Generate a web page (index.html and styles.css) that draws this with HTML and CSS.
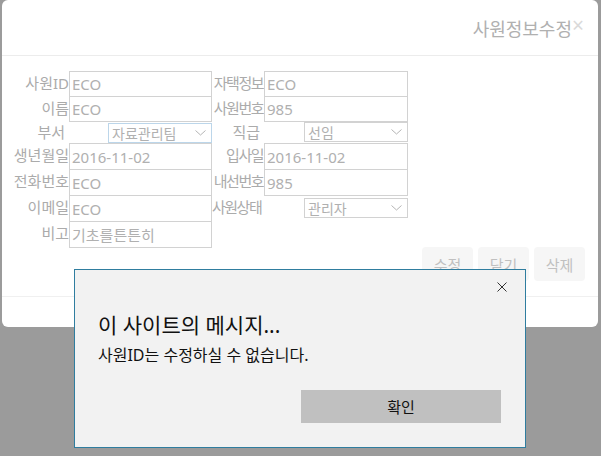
FILE: index.html
```html
<!DOCTYPE html>
<html lang="ko">
<head>
    <meta charset="UTF-8">
    <meta name="viewport" content="width=device-width, initial-scale=1.0">
    <title>사원정보수정</title>
    <link rel="stylesheet" href="styles.css">
</head>
<body>

    <div class="modal">
        <div class="modal-header">
            <h4 class="modal-title">사원정보수정</h4>
            <span class="modal-close">&times;</span>
        </div>

        <div class="modal-body">
            <div class="form-grid">
                <label>사원ID</label>
                <input type="text" value="ECO">
                <label class="narrow">자택정보</label>
                <input type="text" value="ECO">

                <label>이름</label>
                <input type="text" value="ECO">
                <label class="narrow">사원번호</label>
                <input type="text" value="985">

                <label class="pad">부서</label>
                <div class="select focus">
                    <span>자료관리팀</span>
                    <svg width="11" height="6" viewBox="0 0 11 6"><path d="M0.5 0.5 L5.5 5 L10.5 0.5" fill="none" stroke="#b5b5b5" stroke-width="1"/></svg>
                </div>
                <label class="pad">직급</label>
                <div class="select">
                    <span>선임</span>
                    <svg width="11" height="6" viewBox="0 0 11 6"><path d="M0.5 0.5 L5.5 5 L10.5 0.5" fill="none" stroke="#b5b5b5" stroke-width="1"/></svg>
                </div>

                <label>생년월일</label>
                <input type="text" value="2016-11-02">
                <label class="narrow">입사일</label>
                <input type="text" value="2016-11-02">

                <label>전화번호</label>
                <input type="text" value="ECO">
                <label class="narrow">내선번호</label>
                <input type="text" value="985">

                <label>이메일</label>
                <input type="text" value="ECO">
                <label class="left narrow">사원상태</label>
                <div class="select">
                    <span>관리자</span>
                    <svg width="11" height="6" viewBox="0 0 11 6"><path d="M0.5 0.5 L5.5 5 L10.5 0.5" fill="none" stroke="#b5b5b5" stroke-width="1"/></svg>
                </div>

                <label>비고</label>
                <input type="text" value="기초를튼튼히">
            </div>

            <div class="btn-row">
                <button class="btn">수정</button>
                <button class="btn">닫기</button>
                <button class="btn">삭제</button>
            </div>
        </div>

        <div class="modal-footer"></div>
    </div>

    <div class="alert-box">
        <div class="alert-close">
            <svg width="10" height="10" viewBox="0 0 10 10"><path d="M0.5 0.5 L9.5 9.5 M9.5 0.5 L0.5 9.5" stroke="#333" stroke-width="1"/></svg>
        </div>
        <div class="alert-title">이 사이트의 메시지...</div>
        <div class="alert-text">사원ID는 수정하실 수 없습니다.</div>
        <div class="alert-actions">
            <button class="alert-btn">확인</button>
        </div>
    </div>

</body>
</html>
```

FILE: styles.css
```css
body {
    margin: 0;
    padding: 0;
    background-color: #9b9b9b;
    font-family: "Noto Sans", "Noto Sans CJK KR", sans-serif;
    height: 456px;
    overflow: hidden;
}

.modal {
    background: white;
    margin: 0 3px 0 2px;
    border-radius: 6px;
}

.modal-header {
    display: flex;
    justify-content: flex-end;
    align-items: center;
    height: 56px;
    border-bottom: 1px solid #ececec;
    padding-right: 14px;
    box-sizing: border-box;
}

.modal-title {
    margin: 0;
    font-weight: normal;
    font-size: 18px;
    color: #b0b0b0;
}

.modal-close {
    font-size: 21px;
    color: #dadada;
    line-height: 1;
    margin-top: -4px;
}

.modal-body {
    padding-top: 15px;
}

.form-grid {
    display: grid;
    grid-template-columns: 67px 143px 52px 144px;
    grid-template-rows: 25px 25px 22px 26px 26px 26px 26px;
}

.form-grid label {
    display: flex;
    justify-content: flex-end;
    font-size: 15px;
    color: #ababab;
    line-height: 25px;
    white-space: nowrap;
}

.form-grid label.narrow {
    letter-spacing: -1.5px;
    padding-right: 1px;
}

.form-grid label.pad {
    padding-right: 4px;
    line-height: 22px;
}

.form-grid label.left {
    justify-content: flex-start;
}

.form-grid input {
    height: calc(100% + 1px);
    box-sizing: border-box;
    border: 1px solid #d2d2d2;
    padding: 0 2px;
    margin: 0;
    font-family: "Noto Sans", "Noto Sans CJK KR", sans-serif;
    font-size: 15px;
    color: #b0b0b0;
    background: white;
    outline: none;
    width: 100%;
}

.select {
    justify-self: end;
    align-self: center;
    display: flex;
    align-items: center;
    justify-content: space-between;
    box-sizing: border-box;
    width: 104px;
    height: 20px;
    border: 1px solid #d2d2d2;
    padding: 0 5px 0 3px;
    font-size: 14px;
    color: #b0b0b0;
    background: white;
}

.select.focus {
    border-color: #bcd6ea;
    margin-top: 2px;
}

.btn-row {
    display: flex;
    justify-content: flex-end;
    gap: 5px;
    padding: 0 13px 15px 0;
}

.btn {
    width: 51px;
    height: 34px;
    border: none;
    border-radius: 4px;
    background: #f6f6f6;
    color: #c0c0c0;
    font-family: "Noto Sans", "Noto Sans CJK KR", sans-serif;
    font-size: 15px;
    padding: 0;
}

.modal-footer {
    height: 30px;
    border-top: 1px solid #f0f0f0;
}

/* browser alert */
.alert-box {
    position: absolute;
    left: 74px;
    top: 269px;
    width: 452px;
    height: 179px;
    box-sizing: border-box;
    background: #f2f2f2;
    border: 1px solid #2f7d9f;
    padding: 0 24px 0 23px;
    color: #111;
}

.alert-close {
    display: flex;
    justify-content: flex-end;
    padding-top: 12px;
    margin-right: -6px;
    height: 10px;
}

.alert-title {
    font-size: 21px;
    margin-top: 18px;
    line-height: 30px;
}

.alert-text {
    font-size: 16px;
    margin-top: 4px;
    line-height: 22px;
}

.alert-actions {
    display: flex;
    justify-content: flex-end;
    margin-top: 24px;
}

.alert-btn {
    width: 200px;
    height: 33px;
    border: none;
    background: #c0c0c0;
    font-family: "Noto Sans", "Noto Sans CJK KR", sans-serif;
    font-size: 15px;
    color: #111;
    padding: 0;
}
```
